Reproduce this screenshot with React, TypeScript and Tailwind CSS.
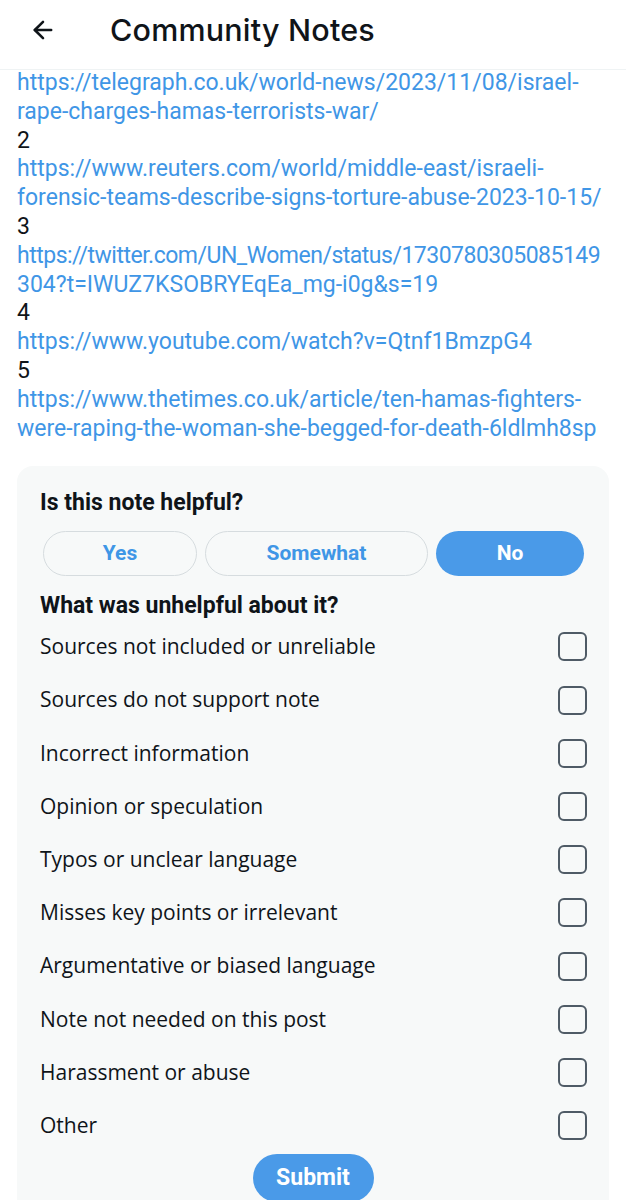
import { ArrowLeft } from "lucide-react";

const links: { num?: string; lines: string[] }[] = [
  { lines: ["https://telegraph.co.uk/world-news/2023/11/08/israel-", "rape-charges-hamas-terrorists-war/"] },
  {
    num: "2",
    lines: ["https://www.reuters.com/world/middle-east/israeli-", "forensic-teams-describe-signs-torture-abuse-2023-10-15/"],
  },
  { num: "3", lines: ["https://twitter.com/UN_Women/status/1730780305085149", "304?t=IWUZ7KSOBRYEqEa_mg-i0g&s=19"] },
  { num: "4", lines: ["https://www.youtube.com/watch?v=Qtnf1BmzpG4"] },
  {
    num: "5",
    lines: ["https://www.thetimes.co.uk/article/ten-hamas-fighters-", "were-raping-the-woman-she-begged-for-death-6ldlmh8sp"],
  },
];

const reasons = [
  "Sources not included or unreliable",
  "Sources do not support note",
  "Incorrect information",
  "Opinion or speculation",
  "Typos or unclear language",
  "Misses key points or irrelevant",
  "Argumentative or biased language",
  "Note not needed on this post",
  "Harassment or abuse",
  "Other",
];

export default function App() {
  return (
    <div className="h-[1200px] w-[626px] overflow-hidden bg-white text-[#0f1419]">
      {/* header */}
      <header className="flex h-[70px] items-center border-b border-[#eff3f4] pb-[10px]">
        <div className="flex w-[110px] items-center pl-[29px]">
          <ArrowLeft className="size-[28px]" strokeWidth={2.2} />
        </div>
        <h1 className="text-[30.5px] font-medium tracking-[0.2px] font-['Inter',sans-serif]">Community Notes</h1>
      </header>

      {/* sources */}
      <div className="-mt-[1px] px-[17px] font-['Roboto',sans-serif] text-[23px] leading-[28.8px]">
        {links.map((l, i) => (
          <div key={i}>
            {l.num && <div className="text-[#0f1419]">{l.num}</div>}
            {l.lines.map((line) => (
              <div
                key={line}
                className={`whitespace-nowrap text-[#3f96e6] ${line.includes("1730780") ? "tracking-[-0.5px]" : ""}`}
              >
                {line}
              </div>
            ))}
          </div>
        ))}
      </div>

      {/* rating card */}
      <section className="mx-[17px] mt-[23px] rounded-2xl bg-[#f7f9f9] px-[23px] pt-[23px] pb-4">
        <h2 className="font-['Roboto',sans-serif] text-[23px] font-bold leading-[28px]">Is this note helpful?</h2>
        <div className="mt-[14px] ml-[3px] flex gap-[8px] font-['Roboto',sans-serif] text-[21px] font-bold">
          <button className="h-[45px] w-[154px] rounded-full border border-[#d6dcdf] text-[#3f96e6]">Yes</button>
          <button className="h-[45px] w-[223px] rounded-full border border-[#d6dcdf] text-[#3f96e6]">Somewhat</button>
          <button className="h-[45px] w-[148px] rounded-full bg-[#4a9ae8] text-white">No</button>
        </div>
        <h2 className="mt-[16px] font-['Roboto',sans-serif] text-[23px] font-bold leading-[28px]">
          What was unhelpful about it?
        </h2>
        <ul className="font-['Open_Sans',sans-serif] text-[21px]">
          {reasons.map((r) => (
            <li key={r} className="flex h-[53.2px] items-center justify-between">
              <span>{r}</span>
              <span className="mr-[-1px] size-[29px] rounded-[6px] border-[2.5px] border-[#4f5b66]" />
            </li>
          ))}
        </ul>
        <div className="mt-[2px] flex justify-center">
          <button className="h-[48px] w-[121px] rounded-full bg-[#4a9ae8] font-['Roboto',sans-serif] text-[23px] font-bold text-white">
            Submit
          </button>
        </div>
      </section>
    </div>
  );
}
